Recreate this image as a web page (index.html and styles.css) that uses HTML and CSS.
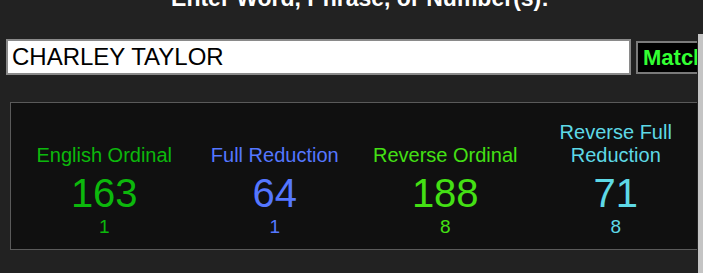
FILE: index.html
```html
<!DOCTYPE html>
<html lang="en">
<head>
    <meta charset="UTF-8">
    <title>Gematria Calculator</title>
    <link rel="stylesheet" href="styles.css">
</head>
<body>
    <div class="screen">
        <div class="viewport">
            <div class="page">
                <h2 class="prompt">Enter Word, Phrase, or Number(s):</h2>

                <!-- entrada y boton -->
                <div class="entry-row">
                    <input type="text" class="phrase-box" value="CHARLEY TAYLOR">
                    <button class="match-btn">Match</button>
                </div>

                <!-- tabla de cifrados -->
                <div class="cipher-panel">
                    <div class="cipher c-eng">
                        <div class="cipher-name">English Ordinal</div>
                        <div class="cipher-value">163</div>
                        <div class="cipher-root">1</div>
                    </div>
                    <div class="cipher c-full">
                        <div class="cipher-name">Full Reduction</div>
                        <div class="cipher-value">64</div>
                        <div class="cipher-root">1</div>
                    </div>
                    <div class="cipher c-rev">
                        <div class="cipher-name">Reverse Ordinal</div>
                        <div class="cipher-value">188</div>
                        <div class="cipher-root">8</div>
                    </div>
                    <div class="cipher c-revfull">
                        <div class="cipher-name">Reverse Full Reduction</div>
                        <div class="cipher-value">71</div>
                        <div class="cipher-root">8</div>
                    </div>
                </div>
            </div>
        </div>
        <div class="scroll-strip"></div>
    </div>
</body>
</html>
```

FILE: styles.css
```css
body {
    margin: 0;
    background-color: #222222;
    font-family: 'Liberation Sans', Arial, sans-serif;
    overflow: hidden;
}
.screen {
    display: flex;
    height: 273px;
}
.viewport {
    width: 697px;
    overflow: hidden;
}
.page {
    width: 720px;
}
.prompt {
    margin: -15px 0 0 0;
    color: #ffffff;
    font-size: 23px;
    font-weight: bold;
    line-height: 26px;
    text-align: center;
}
.entry-row {
    display: flex;
    align-items: center;
    gap: 5px;
    margin: 28px 0 0 6px;
}
.phrase-box {
    box-sizing: border-box;
    width: 625px;
    height: 36px;
    margin: 0;
    padding: 0 4px;
    border: 2px solid #8a8a8a;
    background-color: #ffffff;
    color: #000000;
    font-family: 'Liberation Sans', Arial, sans-serif;
    font-size: 24px;
    outline: none;
}
.match-btn {
    box-sizing: border-box;
    height: 33px;
    margin: 1px 0 0 0;
    padding: 0 5px;
    border: 2px solid #7a7a7a;
    background-color: #000000;
    color: #33ff33;
    font-family: 'Liberation Sans', Arial, sans-serif;
    font-size: 22px;
    font-weight: bold;
    text-align: left;
    white-space: nowrap;
}
.cipher-panel {
    box-sizing: border-box;
    width: 700px;
    margin: 27px 0 0 10px;
    padding: 18px 8px 11px 8px;
    border: 1px solid #5a5a5a;
    background-color: #101010;
    display: grid;
    grid-template-columns: repeat(4, 1fr);
    align-items: end;
}
.cipher {
    text-align: center;
}
.cipher-name {
    font-size: 20px;
    line-height: 23px;
    margin-bottom: 3px;
}
.cipher-value {
    font-size: 40px;
    line-height: 46px;
}
.cipher-root {
    font-size: 19px;
    line-height: 22px;
}
.c-eng { color: #0cb80c; }
.c-full { color: #5577ff; }
.c-rev { color: #44e014; }
.c-revfull { color: #5ed9e6; }

/* barra gris a la derecha */
.scroll-strip {
    width: 5px;
    margin: 34px 0 0 1px;
    background-color: #c4c4c4;
}
```
